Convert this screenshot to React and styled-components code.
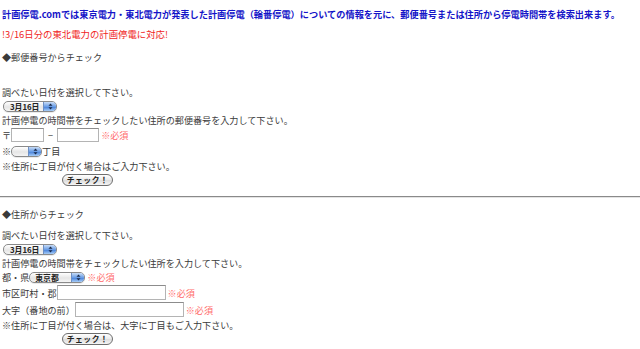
import React from 'react';
import styled, { createGlobalStyle } from 'styled-components';

const GlobalStyle = createGlobalStyle`
  html, body {
    margin: 0;
    padding: 0;
    background: #fff;
  }
  body {
    font-family: "Noto Sans CJK JP", "Noto Sans", sans-serif;
    color: #3a3a3a;
  }
`;

const Page = styled.div`
  padding: 7px 0 0 2px;
  width: 640px;
  height: 349px;
  box-sizing: border-box;
  overflow: hidden;
`;

const Title = styled.h1`
  margin: 0;
  font-size: 9.2px;
  line-height: 14px;
  font-weight: bold;
  color: #1414c8;
  white-space: nowrap;
`;

const Notice = styled.p`
  margin: 6px 0 0;
  font-size: 9.4px;
  line-height: 14px;
  color: #f02525;
`;

const SectionTitle = styled.h2`
  margin: ${(p) => p.$top}px 0 0;
  font-size: 9.1px;
  line-height: 14px;
  font-weight: normal;
  color: #3a3a3a;
`;

const Form = styled.form`
  margin: ${(p) => p.$top}px 0 0;
  font-size: 9.1px;
`;

const Line = styled.div`
  display: flex;
  align-items: center;
  height: ${(p) => p.$h || 14}px;
  line-height: 14px;
  white-space: nowrap;
`;

const Required = styled.span`
  color: #ff6a6a;
  margin-left: 2px;
`;

const TextBox = styled.input`
  box-sizing: border-box;
  width: ${(p) => p.$w}px;
  height: ${(p) => p.$h || 14}px;
  margin: 0 0 0 ${(p) => p.$ml || 0}px;
  padding: 0 2px;
  border: 1px solid #b4b4b4;
  border-top-color: #8c8c8c;
  background: #fff;
  font-size: 9px;
`;

const Dash = styled.span`
  margin: 0 4px;
`;

const Select = styled.div`
  box-sizing: border-box;
  display: flex;
  align-items: stretch;
  width: ${(p) => p.$w}px;
  height: 11px;
  margin-left: ${(p) => p.$ml || 0}px;
  border: 1px solid #8a8a8a;
  border-radius: 5px;
  overflow: hidden;
  background: linear-gradient(#ffffff, #e6e6e6 55%, #f4f4f4);
  box-shadow: 0 1px 0 rgba(0, 0, 0, 0.08);
`;

const SelectLabel = styled.span`
  flex: 1;
  padding-left: ${(p) => p.$pl || 6}px;
  font-size: 7.8px;
  line-height: 9px;
  font-weight: bold;
  color: #222;
`;

const SelectArrow = styled.span`
  width: 12px;
  display: flex;
  align-items: center;
  justify-content: center;
  border-left: 1px solid #6d8fc4;
  background: linear-gradient(#c8dcf6, #6b9ee6 50%, #3e7ad8 51%, #a8cdf6);
`;

const Arrows = () => (
  <svg width="5" height="7" viewBox="0 0 5 7">
    <path d="M2.5 0.5 L4.5 2.8 L0.5 2.8 Z" fill="#1a2a4a" />
    <path d="M2.5 6.5 L4.5 4.2 L0.5 4.2 Z" fill="#1a2a4a" />
  </svg>
);

const ButtonRow = styled.div`
  height: 14px;
  display: flex;
  align-items: center;
  padding-left: 60px;
`;

const Button = styled.button`
  box-sizing: border-box;
  width: 51px;
  height: 12px;
  padding: 0;
  border: 1px solid #6e6e6e;
  border-radius: 6px;
  background: linear-gradient(#ffffff, #e9e9e9 50%, #dcdcdc 51%, #f5f5f5);
  font-family: "Noto Sans CJK JP", sans-serif;
  font-size: 7.8px;
  font-weight: bold;
  line-height: 10px;
  color: #222;
  letter-spacing: 0.5px;
`;

const Rule = styled.hr`
  margin: 9px 0 0 -2px;
  border: 0;
  border-top: 1px solid #8a8a8a;
  border-bottom: 1px solid #e4e4e4;
  height: 0;
`;

const DateSelect = () => (
  <Select $w={54} $ml={1}>
    <SelectLabel>3月16日</SelectLabel>
    <SelectArrow><Arrows /></SelectArrow>
  </Select>
);

export default function App() {
  return (
    <Page>
      <GlobalStyle />
      <Title>
        計画停電.comでは東京電力・東北電力が発表した計画停電（輪番停電）についての情報を元に、郵便番号または住所から停電時間帯を検索出来ます。
      </Title>
      <Notice>!3/16日分の東北電力の計画停電に対応!</Notice>

      <SectionTitle $top={9}>◆郵便番号からチェック</SectionTitle>
      <Form $top={21}>
        <Line>調べたい日付を選択して下さい。</Line>
        <Line><DateSelect /></Line>
        <Line>計画停電の時間帯をチェックしたい住所の郵便番号を入力して下さい。</Line>
        <Line $h={16}>
          〒<TextBox $w={33} $ml={0} />
          <Dash>−</Dash>
          <TextBox $w={42} />
          <Required>※必須</Required>
        </Line>
        <Line $h={16}>
          ※
          <Select $w={31}>
            <SelectLabel />
            <SelectArrow><Arrows /></SelectArrow>
          </Select>
          丁目
        </Line>
        <Line>※住所に丁目が付く場合はご入力下さい。</Line>
        <ButtonRow><Button type="button">チェック！</Button></ButtonRow>
      </Form>

      <Rule />

      <SectionTitle $top={9}>◆住所からチェック</SectionTitle>
      <Form $top={7}>
        <Line>調べたい日付を選択して下さい。</Line>
        <Line><DateSelect /></Line>
        <Line>計画停電の時間帯をチェックしたい住所を入力して下さい。</Line>
        <Line>
          都・県
          <Select $w={56}>
            <SelectLabel $pl={5}>東京都</SelectLabel>
            <SelectArrow><Arrows /></SelectArrow>
          </Select>
          <Required>※必須</Required>
        </Line>
        <Line $h={17}>
          市区町村・郡<TextBox $w={109} $h={15} />
          <Required>※必須</Required>
        </Line>
        <Line $h={17}>
          大字（番地の前）<TextBox $w={109} $h={15} />
          <Required>※必須</Required>
        </Line>
        <Line>※住所に丁目が付く場合は、大字に丁目もご入力下さい。</Line>
        <ButtonRow><Button type="button">チェック！</Button></ButtonRow>
      </Form>
    </Page>
  );
}
